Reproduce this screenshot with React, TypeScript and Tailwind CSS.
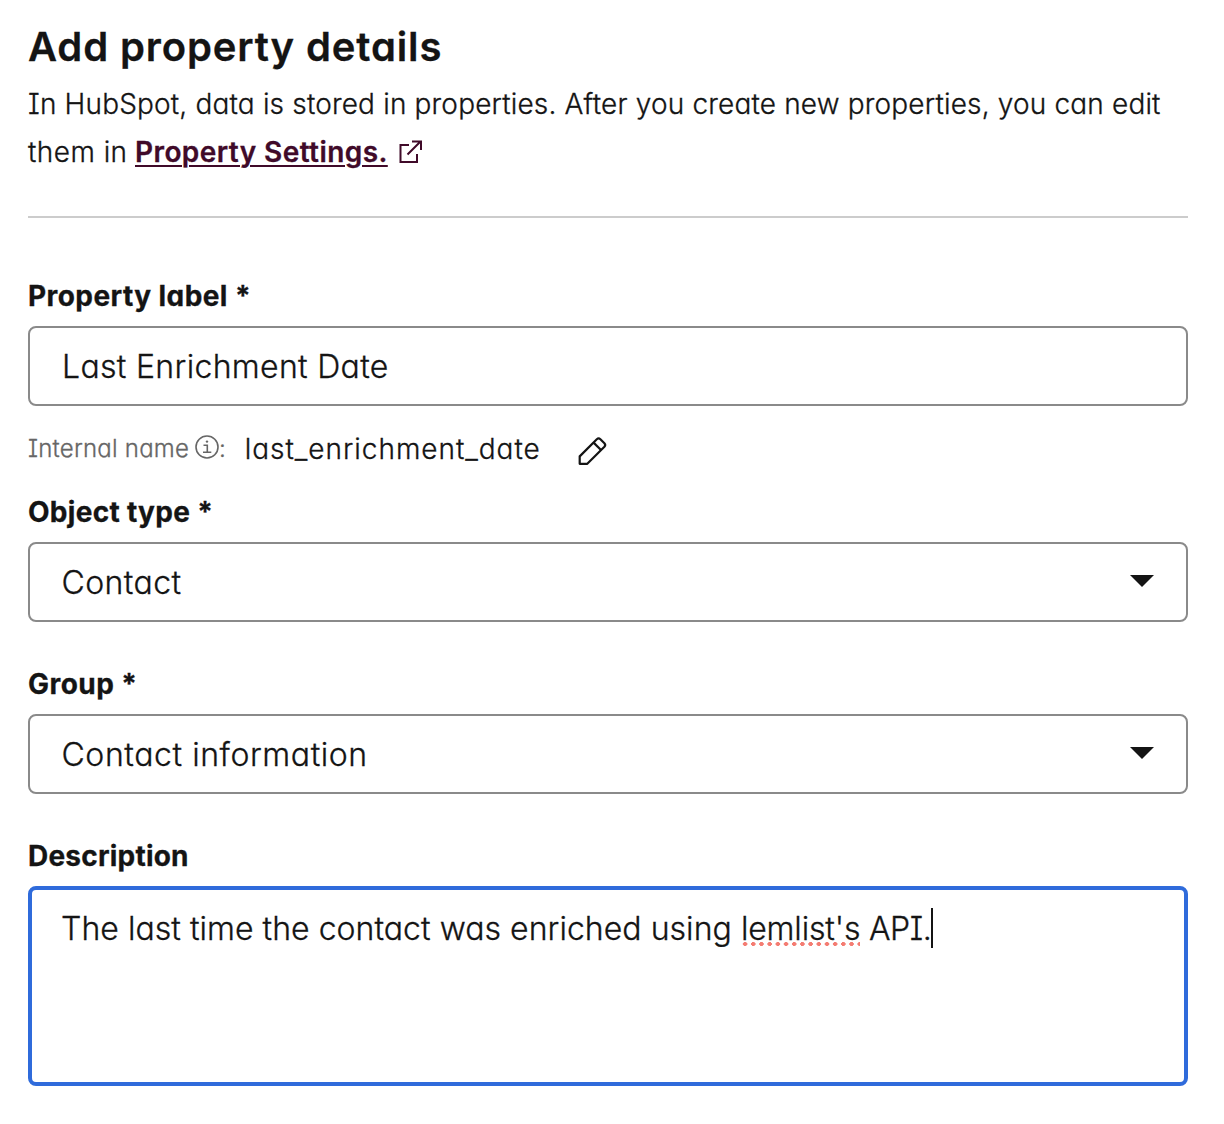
import type { ReactNode } from 'react'

function FieldLabel({ children, className = '' }: { children: ReactNode; className?: string }) {
  return (
    <div className={`mb-1.5 h-12 text-[28px] leading-[48px] font-bold whitespace-nowrap ${className}`}>
      {children}
    </div>
  )
}

function SelectBox({ value, className = '' }: { value: string; className?: string }) {
  return (
    <button
      type="button"
      className="flex h-20 w-full items-center justify-between rounded-lg border-2 border-[#8a8a8a] pt-0.5 pr-8 pl-[31.5px] text-left text-[32px] leading-[74px]"
    >
      <span className={`whitespace-nowrap ${className}`}>{value}</span>
      <svg width="24" height="12" viewBox="0 0 24 12" className="-mt-1">
        <path d="M0 0H24L12 12Z" fill="#141414" />
      </svg>
    </button>
  )
}

function ExternalLinkIcon() {
  return (
    <svg width="24" height="24" viewBox="0 0 24 24" fill="none" stroke="#400a29" strokeWidth="2">
      <path d="M10 5H1.5V22H18V14M13 1.5H22V10M21.5 1.5L8.5 14.5" />
    </svg>
  )
}

function InfoIcon() {
  return (
    <svg width="24" height="24" viewBox="0 0 24 24" fill="none" stroke="#666" strokeWidth="1.6">
      <circle cx="12" cy="12" r="11" />
      <path d="M8.5 10.2H12.3V17.3M8 17.3H16.3" />
      <circle cx="12" cy="6.6" r="1.2" fill="#666" stroke="none" />
    </svg>
  )
}

function PencilIcon() {
  return (
    <svg width="30" height="30" viewBox="0 0 30 30" fill="none" stroke="#141414" strokeWidth="2.2" strokeLinejoin="round">
      <path d="M1.7 27.8V20.4L18.8 3.2Q20.6 1.6 22.4 3.2L26.4 7.2Q28 9 26.4 10.8L9.3 27.8Z" />
      <path d="M15.6 6.6L23 14" />
    </svg>
  )
}

export default function App() {
  return (
    <main className="h-[1124px] w-[1224px] overflow-hidden bg-white pt-[23px] pr-9 pl-7 font-['Inter',sans-serif] font-light text-[#141414] [-webkit-text-stroke:0.3px] [font-feature-settings:'cv11','cv08']">
      <h1 className="h-12 text-[40px] leading-[48px] font-semibold tracking-[0.87px] whitespace-nowrap">
        Add property details
      </h1>
      <div className="mt-[9px] text-[28px] leading-[48px] whitespace-nowrap">
        <p className="tracking-[0.17px]">
          In HubSpot, data is stored in properties. After you create new properties, you can edit
        </p>
        <p className="flex items-center">
          <span className="w-[107px] tracking-[0.45px]">them in</span>
          <a href="#" className="font-semibold tracking-[0.42px] text-[#400a29] underline decoration-2 underline-offset-3">
            Property Settings.
          </a>
          <span className="ml-[11px]">
            <ExternalLinkIcon />
          </span>
        </p>
      </div>
      <div className="mt-10 h-0.5 bg-[#ccc]" />

      <section className="mt-[54px]">
        <FieldLabel className="tracking-[0.43px]">Property label *</FieldLabel>
        <div className="flex h-20 items-center rounded-lg border-2 border-[#8a8a8a] pt-0.5 pl-8 text-[32px]">
          <span className="tracking-[0.32px] whitespace-nowrap">Last Enrichment Date</span>
        </div>
        <div className="flex h-[82px] items-center whitespace-nowrap">
          <span className="w-[167px] pt-1 text-[24px] tracking-[0.22px] text-[#666]">Internal name</span>
          <InfoIcon />
          <span className="pt-1 text-[24px] text-[#666]">:</span>
          <span className="ml-[19px] w-[333px] pt-[3px] text-[28px] tracking-[0.97px]">last_enrichment_date</span>
          <span className="pt-2">
            <PencilIcon />
          </span>
        </div>
      </section>

      <section>
        <FieldLabel className="tracking-[0.3px]">Object type *</FieldLabel>
        <SelectBox value="Contact" className="tracking-[0.4px]" />
      </section>

      <section className="mt-[38px]">
        <FieldLabel className="tracking-[0.45px]">Group *</FieldLabel>
        <SelectBox value="Contact information" className="tracking-[0.57px]" />
      </section>

      <section className="mt-[38px]">
        <FieldLabel className="tracking-[0.22px]">Description</FieldLabel>
        <div className="h-[200px] rounded-lg border-4 border-[#2f6bdb] pt-[18px] pl-[29px]">
          <div className="flex h-10 items-center text-[32px] whitespace-pre">
            <span className="pt-0.5 tracking-[0.04px]">The last time the contact was enriched using </span>
            <span className="relative pt-0.5 tracking-[-0.15px]">
              lemlist's
              <span className="absolute inset-x-0 bottom-[7px] h-1 bg-[radial-gradient(circle,#f47c72_1.9px,transparent_2.3px)] bg-[length:8.2px_4px]" />
            </span>
            <span className="pt-0.5 tracking-[-0.4px]"> API.</span>
            <span className="h-10 w-0.5 bg-[#141414]" />
          </div>
        </div>
      </section>
    </main>
  )
}
